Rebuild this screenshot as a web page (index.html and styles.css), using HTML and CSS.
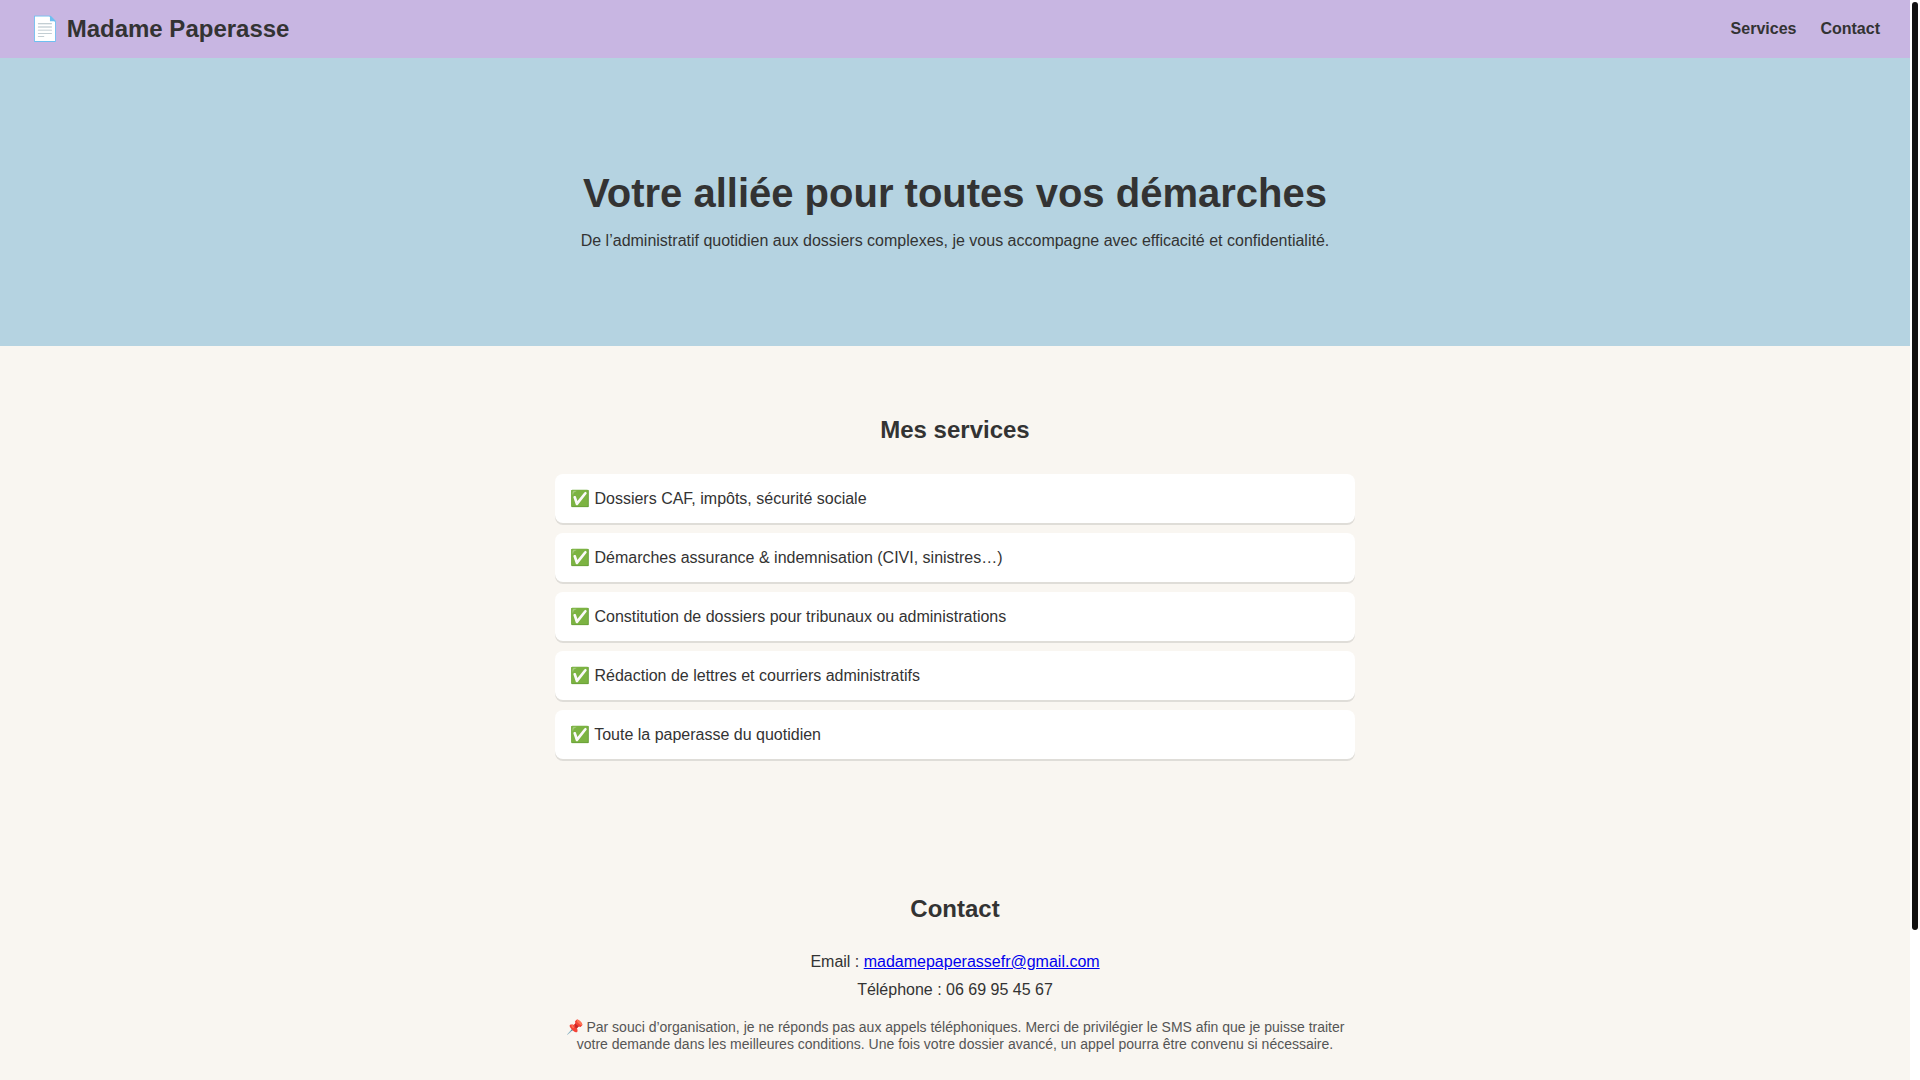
FILE: index.html
```html
<!DOCTYPE html>
<html lang="fr">
<head>
  <meta charset="UTF-8">
  <meta name="viewport" content="width=device-width, initial-scale=1.0">
  <title>Madame Paperasse</title>
  <link rel="stylesheet" href="styles.css">
</head>
<body>
  <div class="page">
    <header class="header">
      <div class="logo">📄 Madame Paperasse</div>
      <nav class="nav">
        <a href="#services">Services</a>
        <a href="#contact">Contact</a>
      </nav>
    </header>

    <section class="hero">
      <h1>Votre alliée pour toutes vos démarches</h1>
      <p>De l’administratif quotidien aux dossiers complexes, je vous accompagne avec efficacité et confidentialité.</p>
    </section>

    <section class="section" id="services">
      <h2>Mes services</h2>
      <ul class="services">
        <li>✅ Dossiers CAF, impôts, sécurité sociale</li>
        <li>✅ Démarches assurance &amp; indemnisation (CIVI, sinistres…)</li>
        <li>✅ Constitution de dossiers pour tribunaux ou administrations</li>
        <li>✅ Rédaction de lettres et courriers administratifs</li>
        <li>✅ Toute la paperasse du quotidien</li>
      </ul>
    </section>

    <section class="section contact" id="contact">
      <h2>Contact</h2>
      <p>Email : <a href="mailto:madamepaperassefr@gmail.com">madamepaperassefr@gmail.com</a></p>
      <p>Téléphone : 06 69 95 45 67</p>
      <p class="note">📌 Par souci d’organisation, je ne réponds pas aux appels téléphoniques. Merci de privilégier le SMS afin que je puisse traiter votre demande dans les meilleures conditions. Une fois votre dossier avancé, un appel pourra être convenu si nécessaire.</p>
    </section>
  </div>

  <div class="scrollbar" aria-hidden="true">
    <div class="scrollbar-thumb"></div>
  </div>
</body>
</html>
```

FILE: styles.css
```css
body {
  margin: 0;
  font-family: "Liberation Sans", Arial, sans-serif;
  background: #f9f6f1;
  color: #333;
}
.page {
  margin-right: 10px;
}

/* Scrollbar */
.scrollbar {
  position: fixed;
  top: 0;
  right: 0;
  bottom: 0;
  box-sizing: border-box;
  width: 10px;
  padding: 2px;
  background: white;
}
.scrollbar-thumb {
  width: 6px;
  height: 86.2%;
  background: #111;
  border-radius: 3px;
}

/* Header */
.header {
  display: flex;
  justify-content: space-between;
  align-items: center;
  padding: 15px 30px;
  background: #c8b6e2;
}
.logo {
  font-size: 24px;
  font-weight: bold;
}
.nav {
  display: flex;
  gap: 24px;
}
.nav a {
  color: #333;
  font-weight: bold;
  text-decoration: none;
}

/* Hero */
.hero {
  padding: 112px 20px 96px;
  background: #b5d3e1;
  text-align: center;
}
.hero h1 {
  margin: 0 0 16px;
  font-size: 40px;
  line-height: 46px;
}
.hero p {
  margin: 0;
}

/* Sections */
.section {
  max-width: 800px;
  margin: auto;
  padding: 50px 20px;
}
.section h2 {
  margin: 20px 0 30px;
  font-size: 24px;
  text-align: center;
}
.services {
  margin: 16px 0;
  padding: 0;
  list-style: none;
}
.services li {
  margin: 10px 0;
  padding: 15px;
  background: white;
  border-radius: 8px;
  box-shadow: 0 2px 0 rgba(0,0,0,0.1);
}

/* Contact */
.contact {
  text-align: center;
}
.contact p {
  margin: 10px 0;
}
.contact .note {
  margin-top: 20px;
  font-size: 14px;
  line-height: 17px;
  color: #555;
}
```
